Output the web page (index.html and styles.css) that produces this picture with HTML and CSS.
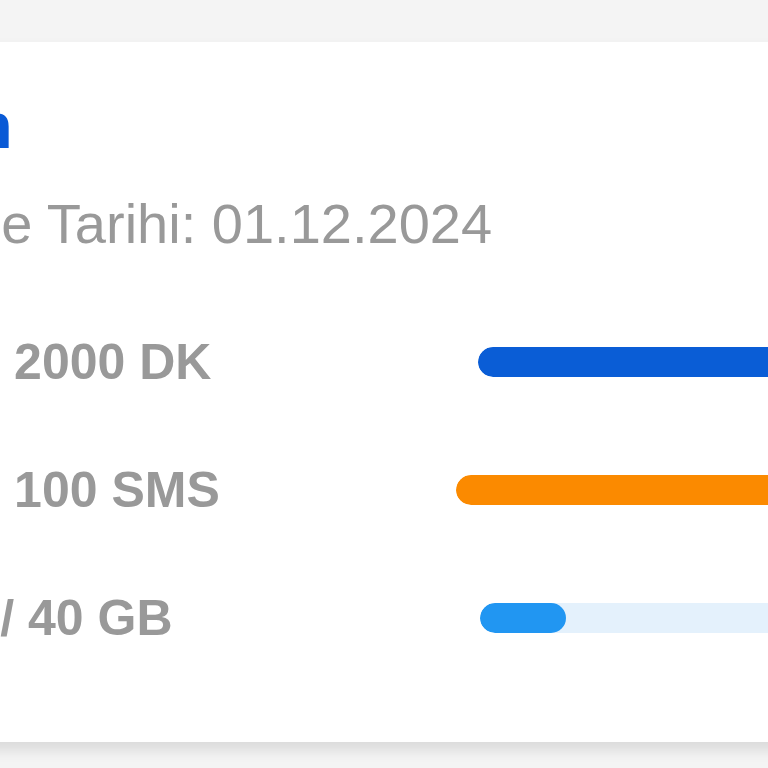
FILE: index.html
```html
<!DOCTYPE html>
<html lang="tr">
<head>
<meta charset="utf-8">
<title>Tarifen</title>
<link rel="stylesheet" href="styles.css">
</head>
<body>
<div class="page">
  <section class="card">
    <h1 class="title">Tarifen</h1>
    <p class="date">Yenileme Tarihi: 01.12.2024</p>
    <div class="rows">
      <div class="row">
        <span class="icon"><svg viewBox="0 0 24 24" width="64" height="64"><circle cx="12" cy="12" r="10" fill="#e6effc"/></svg></span>
        <span class="label">820 / 2000 DK</span>
        <div class="track track-blue"><div class="fill fill-blue" style="width:41%"></div></div>
        <span class="pct">%41</span>
      </div>
      <div class="row">
        <span class="icon"><svg viewBox="0 0 24 24" width="64" height="64"><circle cx="12" cy="12" r="10" fill="#fff1e0"/></svg></span>
        <span class="label">100 / 100 SMS</span>
        <div class="track track-orange"><div class="fill fill-orange" style="width:100%"></div></div>
        <span class="pct">%100</span>
      </div>
      <div class="row">
        <span class="icon"><svg viewBox="0 0 24 24" width="64" height="64"><circle cx="12" cy="12" r="10" fill="#e4f1fc"/></svg></span>
        <span class="label">4.30 / 40 GB</span>
        <div class="track track-light"><div class="fill fill-light" style="width:10.75%"></div></div>
        <span class="pct">%11</span>
      </div>
    </div>
  </section>
</div>
</body>
</html>
```
FILE: styles.css
```css
html, body {
  margin: 0;
  padding: 0;
  overflow: hidden;
  background: #f4f4f4;
  font-family: "Liberation Sans", Arial, sans-serif;
}
.page {
  padding-top: 42px;
  height: 768px;
  box-sizing: border-box;
}
.card {
  margin-left: -236px;
  width: 1578px;
  padding: 46px 40px 94px 40px;
  background: #ffffff;
  border-radius: 24px;
  box-shadow: 0 8px 14px rgba(0, 0, 0, 0.11);
}
.title {
  margin: 0;
  font-size: 64px;
  line-height: 76px;
  font-weight: 700;
  color: #0a5ad6;
}
.date {
  margin: 27px 0 0 0;
  font-size: 56px;
  line-height: 66px;
  color: #999999;
}
.rows {
  margin-top: 75px;
  display: flex;
  flex-direction: column;
  gap: 68px;
}
.row {
  display: flex;
  align-items: center;
  height: 60px;
}
.icon {
  display: flex;
  width: 64px;
  height: 60px;
  align-items: center;
  margin-right: 21px;
}
.label {
  font-size: 50px;
  line-height: 60px;
  font-weight: 700;
  color: #999999;
  white-space: nowrap;
}
.track {
  margin-left: auto;
  width: 800px;
  height: 30px;
  border-radius: 15px;
  overflow: hidden;
}
.fill {
  height: 100%;
  border-radius: 15px;
}
.track-blue { background: #e3edfb; }
.track-orange { background: #fff0dc; }
.track-light { background: #e4f1fc; }
.fill-blue { background: #0a5dd6; }
.fill-orange { background: #fb8a00; }
.fill-light { background: #2196f2; }
.pct {
  margin-left: 24px;
  font-size: 40px;
  font-weight: 700;
  color: #999999;
  white-space: nowrap;
}
```
